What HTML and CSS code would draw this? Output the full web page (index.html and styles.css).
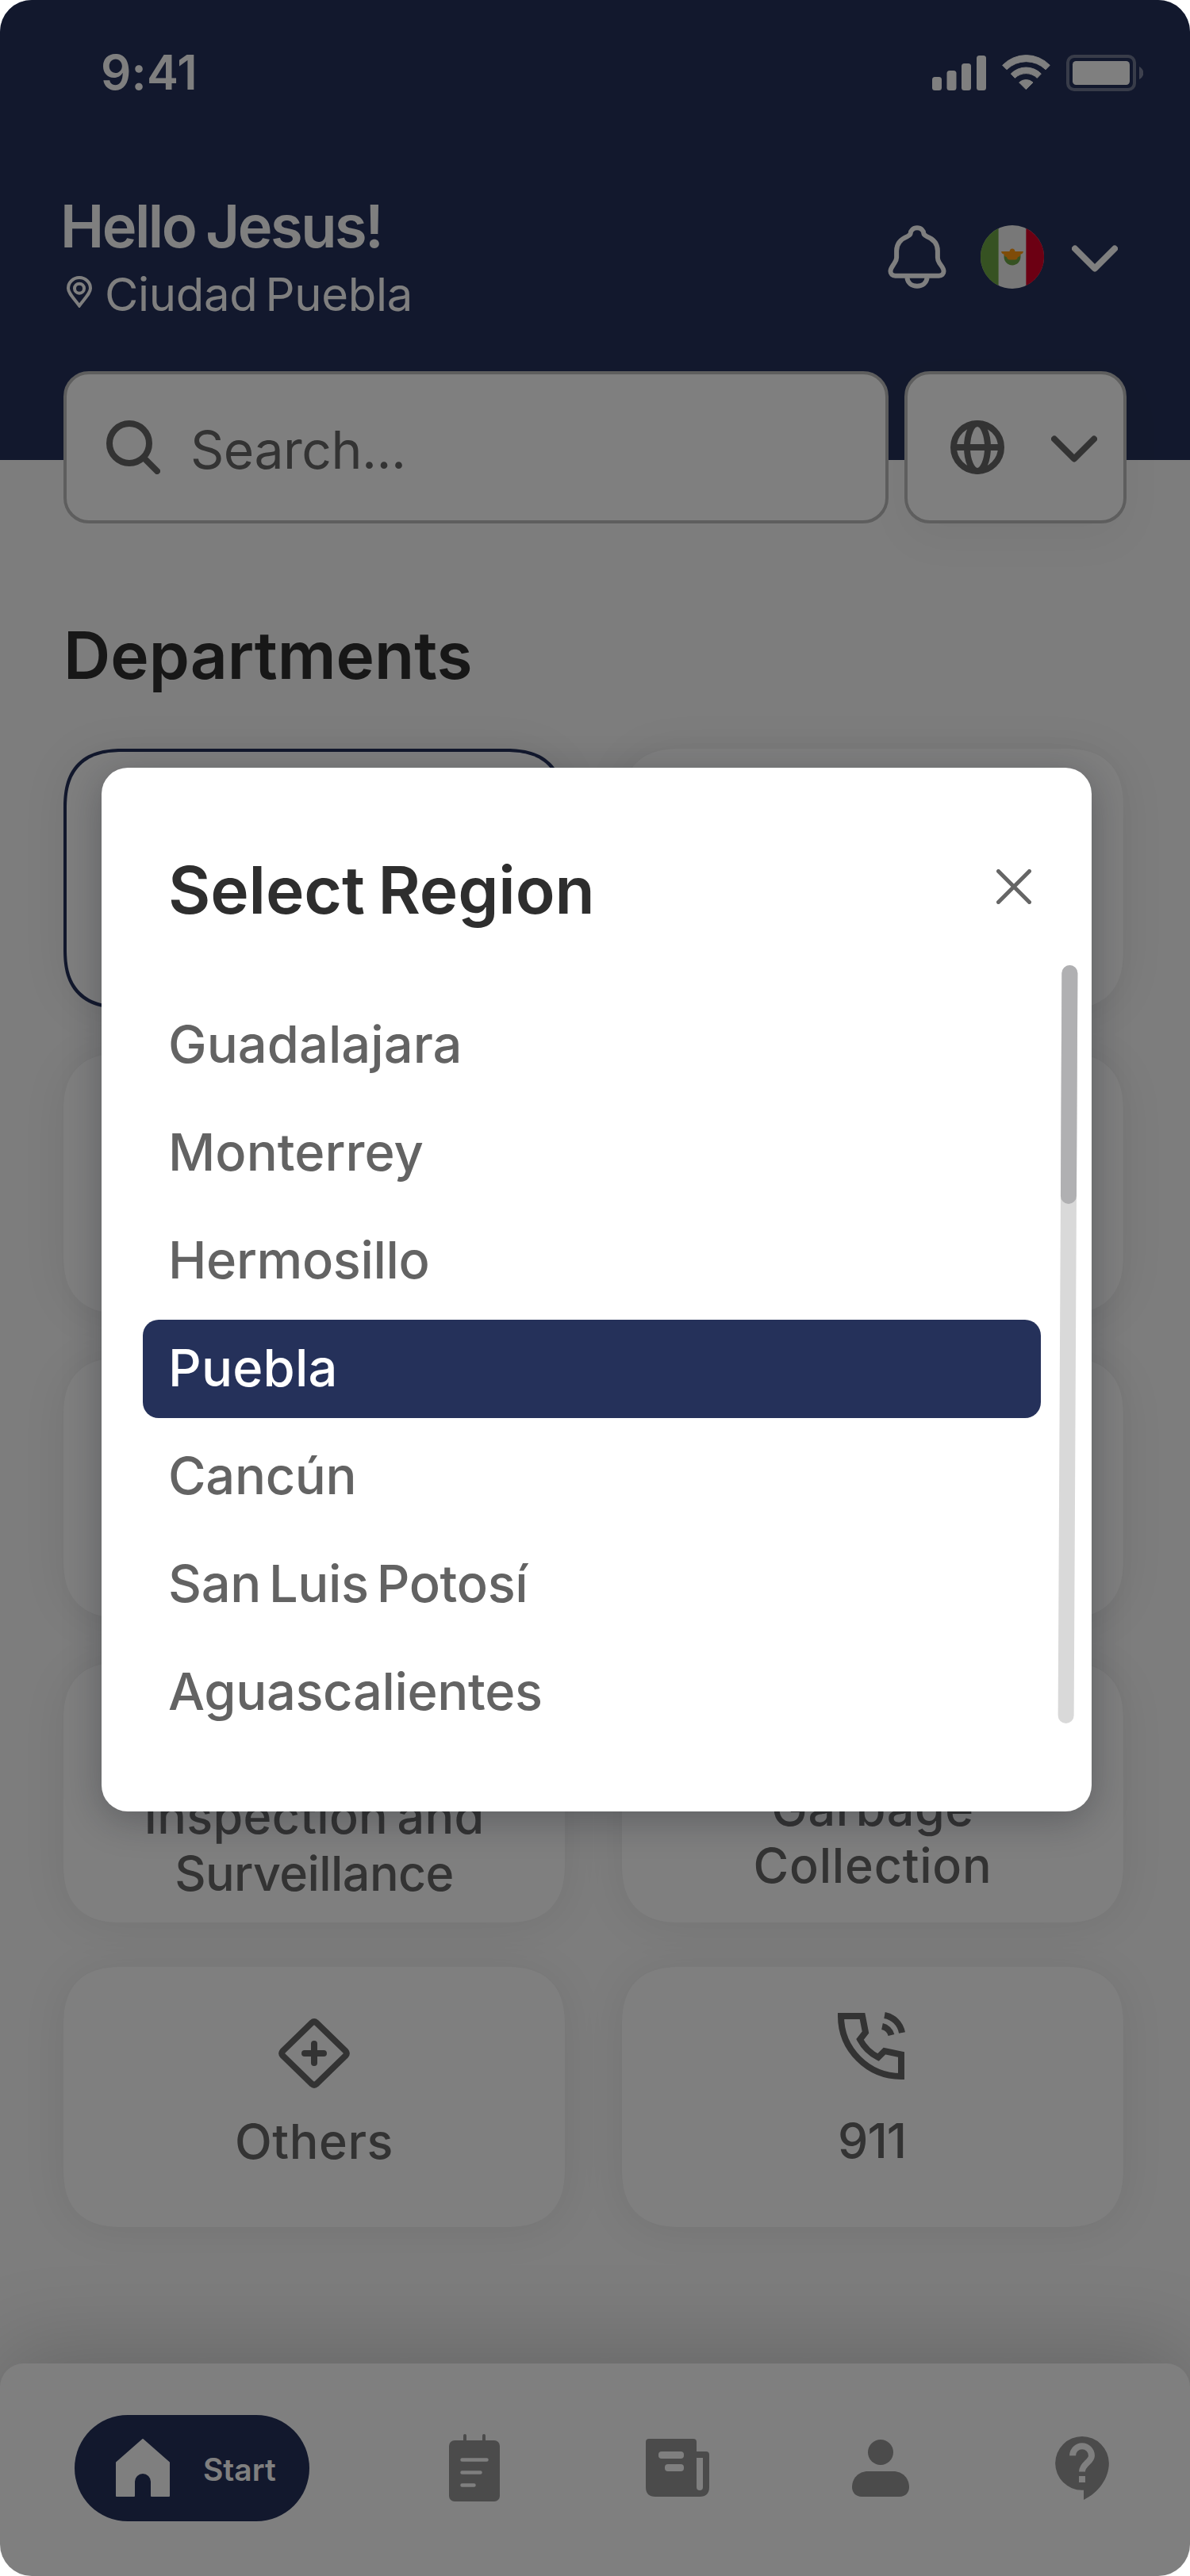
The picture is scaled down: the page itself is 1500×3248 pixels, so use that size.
FILE: index.html
```html
<!DOCTYPE html>
<html lang="en">
<head>
<meta charset="utf-8">
<title>Departments</title>
<link rel="stylesheet" href="styles.css">
</head>
<body>
<div class="screen">
  <header class="top">
    <div class="status">
      <span class="clock">9:41</span>
      <svg class="status-icons" viewBox="1175 69 266 46" fill="#fff">
        <rect x="1175" y="97" width="12" height="17" rx="3.5"/>
        <rect x="1193.500" y="89" width="12" height="25" rx="3.500"/>
        <rect x="1212" y="80" width="12" height="34" rx="3.5"/>
        <rect x="1231" y="70" width="12" height="44" rx="3.5"/>
        <g transform="translate(1080 0) scale(.33333)" stroke="#fff" stroke-width="3" stroke-linejoin="round">
          <path d="M551 247A124 124 0 0 1 730 247L714 263A105 105 0 0 0 567 263Z"/>
          <path d="M583 279A80 80 0 0 1 697 279L682 295A60 60 0 0 0 598 295Z"/>
          <path d="M614 312A38 38 0 0 1 666 312L640 338Z"/>
        </g>
        <rect x="1346" y="71" width="84" height="42" rx="8" fill="none" stroke="#fff" stroke-opacity=".35" stroke-width="4"/>
        <rect x="1352" y="77" width="72" height="30" rx="4.500"/>
        <path d="M1436 84C1439 85.500 1441.300 88.500 1441.300 92S1439 98.500 1436 100Z" fill-opacity=".4"/>
      </svg>
    </div>
    <div class="greeting">
      <div class="who">
        <div class="hello">Hello Jesus!</div>
        <div class="place">
          <svg class="pin" viewBox="0 0 32 40" fill="none" stroke="#fff" stroke-width="4">
            <path d="M16 37.500C9 28 2 21.500 2 15.500A14 13.500 0 0 1 30 15.500C30 21.500 23 28 16 37.500Z"/>
            <circle cx="16" cy="15.700" r="6"/>
          </svg>
          <span>Ciudad Puebla</span>
        </div>
      </div>
      <svg class="bell" viewBox="117 851 222 241" fill="none" stroke="#fff" stroke-width="18">
        <path d="M228 861C212 861 203 872 203 882C202 888 198 890 192 893C167 903 150 922 150 948V974C150 982 147 988 142 995C136 1005 127 1014 127 1026C127 1036 134 1043 145 1043H311C322 1043 329 1036 329 1026C329 1014 320 1005 313 995C308 988 306 982 306 974V948C306 922 290 903 264 893C258 890 254 888 253 882C253 872 244 861 228 861Z"/>
        <path d="M190 1050C192 1070 208 1082 228 1082S264 1070 266 1050"/>
      </svg>
      <svg class="flag" viewBox="0 0 512 512">
        <circle cx="256" cy="256" r="256" fill="#f0f0f0"/>
        <path fill="#d80027" d="M512 256c0-101.494-59.065-189.190-144.696-230.598v461.195C452.935 445.190 512 357.494 512 256z"/>
        <path fill="#6da544" d="M0 256c0 101.494 59.065 189.190 144.696 230.598V25.402C59.065 66.810 0 154.506 0 256zM189.217 256c0 36.883 29.900 66.783 66.783 66.783s66.783-29.900 66.783-66.783v-22.261H189.217V256z"/>
        <path fill="#ff9811" d="M345.043 211.478H278.260c0-12.294-9.967-22.261-22.261-22.261s-22.261 9.967-22.261 22.261h-66.783c0 12.295 10.709 22.261 23.002 22.261h-.741c0 12.295 9.966 22.261 22.261 22.261 0 12.295 9.966 22.261 22.261 22.261h44.522c12.295 0 22.261-9.966 22.261-22.261 12.295 0 22.261-9.966 22.261-22.261h-.741C334.335 233.739 345.043 223.773 345.043 211.478z"/>
      </svg>
      <svg class="chev" viewBox="0 0 58 34" fill="none" stroke="#fff" stroke-width="8" stroke-linecap="round" stroke-linejoin="round"><path d="M4 4.500L29 29.500L54 4.500"/></svg>
    </div>
  </header>

  <main class="content">
    <div class="search-row">
      <div class="box search">
        <svg class="glass" viewBox="0 0 68 68" fill="none" stroke="#666" stroke-width="8" stroke-linecap="round"><circle cx="29" cy="29" r="25"/><path d="M47 47L64 64"/></svg>
        <span>Search...</span>
      </div>
      <div class="box lang">
        <svg class="globe" viewBox="0 0 68 68" fill="none" stroke="#666" stroke-width="8"><circle cx="34" cy="34" r="30"/><ellipse cx="34" cy="34" rx="13" ry="30"/><path d="M4 34H64"/></svg>
        <svg class="chev" viewBox="0 0 58 34" fill="none" stroke="#666" stroke-width="8" stroke-linecap="round" stroke-linejoin="round"><path d="M4 4.500L29 29.500L54 4.500"/></svg>
      </div>
    </div>
    <h1 class="heading">Departments</h1>
    <div class="cards">
      <div class="card selected"></div><div class="card"></div>
      <div class="card"></div><div class="card"></div>
      <div class="card"></div><div class="card"></div>
      <div class="card low"><span class="l-insp">Inspection and</span><span class="l-surv">Surveillance</span></div>
      <div class="card low garbage"><span class="l-garb">Garbage</span><span class="l-coll">Collection</span></div>
      <div class="card others">
        <svg viewBox="0 0 90 88" fill="none" stroke="#666" stroke-width="8" stroke-linecap="round" stroke-linejoin="round"><path d="M42 5.500Q45 3 48 5.500L84.500 41Q87 44 84.500 47L48 82.500Q45 85 42 82.500L5.500 47Q3 44 5.500 41ZM45 32V56M33 44H57"/></svg>
        <span class="l-othr">Others</span>
      </div>
      <div class="card emergency">
        <svg viewBox="1056 2537 85 85" fill="none" stroke="#666" stroke-width="8"><path d="M1060 2542H1087L1091 2562.500L1084 2571.500C1089 2581 1097 2589 1107 2594L1115 2586L1136 2590.500V2618C1094 2618 1060 2584 1060 2542Z"/><path d="M1115 2541A27 27 0 0 1 1137 2563M1112 2555A15 15 0 0 1 1123.500 2566"/></svg>
        <span class="l-911">911</span>
      </div>
    </div>
  </main>

  <nav class="nav">
    <div class="pill">
      <svg viewBox="0 0 68 73" fill="#fff" stroke="#fff" stroke-width="2" stroke-linejoin="round"><path d="M1 30L34 1L67 30V72H45V54A11 11 0 0 0 23 54V72H1Z"/></svg>
      <span>Start</span>
    </div>
    <svg class="clip" viewBox="562 3069 72 85" fill="#969696"><path d="M586 3082V3071M610 3082V3071" stroke="#969696" stroke-width="4" stroke-linecap="round"/><rect x="566" y="3077" width="64" height="77" rx="7"/><path d="M582.500 3101.500H613.500M582.500 3117.500H605.500M582.500 3133.500H597.500" stroke="#fff" stroke-width="4.500" stroke-linecap="round"/></svg>
    <svg class="news" viewBox="814 3075 80 73"><path fill="#969696" d="M818 3075H874Q878 3075 878 3079V3091H890Q894 3091 894 3095V3136Q894 3148 882 3148H826Q814 3148 814 3136V3079Q814 3075 818 3075Z"/><path fill="#fff" d="M878 3099H886V3136A4 4 0 0 1 878 3136Z"/><rect x="830" y="3091" width="32" height="9" rx="4" fill="#fff"/><rect x="838" y="3107" width="24" height="9" rx="4" fill="#fff"/></svg>
    <svg class="person" viewBox="1074 3076 72 72" fill="#969696"><circle cx="1110" cy="3092" r="16"/><path d="M1094 3116H1126C1138 3116 1146 3125 1146 3136C1146 3143 1141 3148 1134 3148H1086C1079 3148 1074 3143 1074 3136C1074 3125 1082 3116 1094 3116Z"/></svg>
    <svg class="help" viewBox="48 64 228 241"><path fill="#969696" d="M162 64A102 102 0 0 0 60 166A102 102 0 0 0 162 268H168V305C225 278 264 222 264 166A102 102 0 0 0 162 64Z"/><path fill="none" stroke="#fff" stroke-width="24" d="M126 137A36 36 0 0 1 198 137C198 161 162 168 162 198"/><path fill="#fff" d="M150 215h24v24h-24z"/></svg>
  </nav>

  <div class="overlay">
    <section class="modal">
      <div class="modal-head">
        <h2>Select Region</h2>
        <svg class="close" viewBox="0 0 44 44" stroke="#666" stroke-width="5" stroke-linecap="round"><path d="M2.500 2.500L41.500 41.500M41.500 2.500L2.500 41.500"/></svg>
      </div>
      <div class="modal-body">
        <ul class="regions">
          <li>Guadalajara</li>
          <li>Monterrey</li>
          <li class="snug">Hermosillo</li>
          <li class="on">Puebla</li>
          <li class="snug">Cancún</li>
          <li class="snug">San Luis Potosí</li>
          <li class="snug">Aguascalientes</li>
        </ul>
        <div class="track"><div class="thumb"></div></div>
      </div>
    </section>
  </div>
</div>
</body>
</html>
```
FILE: styles.css
```css
* { box-sizing: border-box; margin: 0; padding: 0; }
body { background: #fff; font-family: Inter, "Liberation Sans", sans-serif; }
svg { display: block; flex: none; }
span, h1, h2, li { white-space: nowrap; }

.screen { position: relative; width: 1500px; height: 3248px; overflow: hidden; border-radius: 40px; background: #fafafa; }

.top { height: 580px; background: #25315a; color: #fff; }
.status { display: flex; align-items: center; justify-content: space-between; height: 182px; padding: 0 59px 0 127px; }
.clock { font-size: 60px; font-weight: 600; letter-spacing: .2px; }
.status-icons { width: 266px; height: 46px; margin-top: 2px; }
.greeting { display: flex; align-items: center; margin-top: 60px; padding: 0 91px 0 76px; height: 172px; }
.who { flex: 1; }
.hello { font-size: 74px; font-weight: 600; line-height: 86px; letter-spacing: -2.5px; word-spacing: -3px; }
.place { display: flex; align-items: center; gap: 16px; padding-left: 8px; font-size: 58px; line-height: 86px; letter-spacing: -.3px; word-spacing: -6px; }
.pin { width: 32px; height: 40px; margin-bottom: 6px; }
.bell { width: 74px; height: 80px; margin: -8px 43px 0 0; }
.flag { width: 80px; height: 80px; margin: -8px 35px 0 0; }
.chev { width: 58px; height: 34px; }
.greeting .chev { margin-top: -4px; }

.content { margin-top: -112px; padding: 0 80px; }
.search-row { display: flex; gap: 20px; }
.box { display: flex; align-items: center; height: 192px; border: 4px solid #bcbcbc; border-radius: 32px; background: #fff; }
.search { width: 1040px; padding-left: 50px; gap: 38px; font-size: 66px; color: #666; letter-spacing: -.5px; }
.search span { padding-top: 6px; }
.glass, .globe { width: 68px; height: 68px; }
.lang { width: 280px; padding-left: 54px; gap: 59px; box-shadow: 0 20px 56px rgba(0, 0, 0, .04); }
.lang .chev { margin-top: 4px; }

.heading { margin: 117px 0 67px; font-size: 82px; font-weight: 600; line-height: 100px; color: #2e2e2e; letter-spacing: 0; }
.cards { display: grid; grid-template-columns: 632px 632px; grid-auto-rows: 328px; gap: 56px 72px; }
.card { display: flex; flex-direction: column; align-items: center; border-radius: 76px; corner-shape: superellipse(1.35); background: #fff; box-shadow: 0 4px 56px rgba(0, 0, 0, .08); font-size: 61px; font-weight: 530; line-height: 72px; color: #666; }
.selected { border: 4px solid #25315a; }
.low { justify-content: flex-end; padding-bottom: 26px; }
.garbage { padding-bottom: 36px; }
.others { padding-top: 65px; gap: 31px; }
.others svg { width: 90px; height: 88px; }
.emergency { padding-top: 57px; gap: 41px; }
.emergency svg { width: 85px; height: 85px; margin-right: 3px; }
.l-insp { letter-spacing: .3px; word-spacing: -5px; }
.l-surv { letter-spacing: -.6px; }
.l-garb { letter-spacing: .6px; }
.l-coll { letter-spacing: .8px; }
.l-othr { letter-spacing: .6px; }
.l-911 { letter-spacing: -1px; margin-right: 2px; }

.nav { display: flex; align-items: center; gap: 180px; height: 268px; margin-top: 172px; padding: 0 94px 5px; border-radius: 30px 30px 0 0; background: #fff; box-shadow: 0 -16px 112px rgba(0, 0, 0, .19); }
.pill { display: flex; align-items: center; gap: 42px; width: 296px; height: 134px; margin-right: -8px; padding-left: 52px; border-radius: 67px; background: #25315a; color: #fff; font-size: 39px; font-weight: 600; letter-spacing: 0; }
.pill span { padding-top: 3px; }
.pill svg { width: 68px; height: 73px; }
.clip { width: 72px; height: 85px; }
.news { width: 80px; height: 73px; }
.person { width: 72px; height: 72px; }
.help { width: 76px; height: 80px; }

.overlay { position: absolute; inset: 0; padding: 968px 0 0 128px; background: rgba(0, 0, 0, .5); }
.modal { width: 1248px; height: 1316px; border-radius: 33px; background: #fff; box-shadow: 0 10px 48px rgba(20, 22, 34, .3); }
.modal-head { display: flex; align-items: center; justify-content: space-between; height: 288px; padding: 0 76px 0 84px; }
.modal-head h2 { padding-top: 21px; font-size: 82px; font-weight: 600; line-height: 100px; color: #2e2e2e; letter-spacing: -.1px; word-spacing: -4px; }
.close { width: 44px; height: 44px; margin-top: 12px; }
.modal-body { display: flex; gap: 24px; padding-left: 52px; }
.regions { display: grid; gap: 12px; width: 1132px; list-style: none; }
.regions li { height: 124px; padding-left: 32px; border-radius: 20px; font-size: 65px; font-weight: 530; line-height: 121px; letter-spacing: .05px; word-spacing: -7px; color: #636363; }
.regions .on { background: #25315a; color: #fff; letter-spacing: .2px; }
.regions .snug { letter-spacing: -.35px; }
.track { width: 19.500px; height: 956px; margin-top: -39px; border-radius: 10px; background: #d9d9d9; transform: rotate(.29deg); }
.thumb { height: 301px; border-radius: 10px; background: #b0b0b2; }
```
